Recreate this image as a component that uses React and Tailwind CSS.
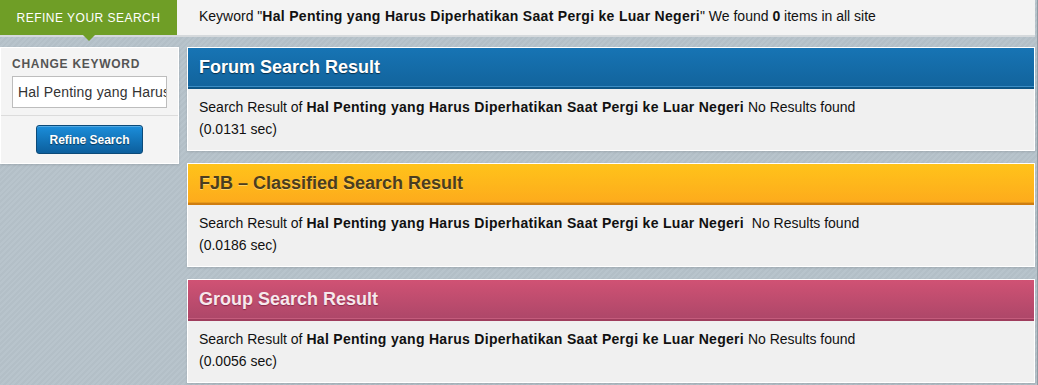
import React from "react";

const KEYWORD = "Hal Penting yang Harus Diperhatikan Saat Pergi ke Luar Negeri";

const SECTIONS = [
  {
    title: "Forum Search Result",
    head: "bg-gradient-to-b from-[#1774b4] to-[#12649d] text-white [text-shadow:0_1px_1px_rgba(0,0,0,0.55)]",
    strip: "bg-[#0d5585] border-t border-[#3a8cc4]",
    time: "0.0131",
    gap: " ",
  },
  {
    title: "FJB \u2013 Classified Search Result",
    head: "bg-gradient-to-b from-[#ffc31a] to-[#fdab1c] text-[#4b3d1f] [text-shadow:0_1px_0_rgba(255,230,150,0.6)]",
    strip: "bg-[#cf7d10] border-t border-[#e79a1a]",
    time: "0.0186",
    gap: "\u00a0 ",
  },
  {
    title: "Group Search Result",
    head: "bg-gradient-to-b from-[#d05274] to-[#ae4769] text-[#f7e8ec] [text-shadow:0_1px_1px_rgba(80,0,30,0.45)]",
    strip: "bg-[#9f3d5d] border-t border-[#c45c7c]",
    time: "0.0056",
    gap: " ",
  },
];

function ResultCard({ s }) {
  return (
    <div className="border border-white bg-[#f0f0f0] shadow-[0_1px_2px_rgba(0,0,0,0.12)]">
      <div className={`h-[38px] flex items-center px-[11px] text-[18px] font-bold ${s.head}`}>
        {s.title}
      </div>
      <div className={`h-[3px] ${s.strip}`} />
      <div className="h-[61px] px-[11px] pt-[7px] text-[14px] leading-[22px] text-[#111]">
        <div className="whitespace-nowrap">
          Search Result of <b className="tracking-[0.3px]">{KEYWORD}</b>{s.gap}No Results found
        </div>
        <div>({s.time} sec)</div>
      </div>
    </div>
  );
}

export default function App() {
  return (
    <div className="min-h-screen w-full font-['Liberation_Sans',Arial,sans-serif] bg-[#b6c2ca] bg-[repeating-linear-gradient(135deg,#b8c4cc_0px,#b8c4cc_2px,#b3bfc7_2px,#b3bfc7_4px)] pr-[2px] border-r border-[#8f9ba3]">
      {/* top bar */}
      <div className="relative flex h-[37px] bg-[#f3f3f3] border-b-2 border-[#d5d9dc]">
        <div className="relative w-[177px] h-[35px] bg-[#6f9e26] flex items-center justify-center text-white text-[12px] tracking-[0.04em]">
          REFINE YOUR SEARCH
          <span className="absolute left-[83px] top-[35px] w-0 h-0 border-l-[6px] border-r-[6px] border-t-[6px] border-l-transparent border-r-transparent border-t-[#6f9e26]" />
        </div>
        <div className="flex items-center pl-[22px] pb-[2px] text-[14px] text-[#111] whitespace-nowrap">
          Keyword "<b className="tracking-[0.3px]">{KEYWORD}</b>" We found&nbsp;<b>0</b>&nbsp;items in all site
        </div>
      </div>

      <div className="flex gap-[8px] pt-[10px]">
        {/* sidebar */}
        <div className="w-[179px] shrink-0 self-start">
          <div className="bg-[#f4f4f4] border border-white shadow-[0_1px_2px_rgba(0,0,0,0.12)]">
            <div className="px-[11px] pt-[9px] pb-[7px]">
              <div className="text-[12px] font-bold text-[#555] tracking-[0.06em] leading-[14px]">CHANGE KEYWORD</div>
              <div className="mt-[5px] h-[32px] w-[155px] bg-white border border-[#bdbdbd] px-[5px] flex items-center overflow-hidden whitespace-nowrap text-[14px] tracking-[0.2px] text-[#333]">
                {KEYWORD}
              </div>
            </div>
            <div className="border-t border-[#dcdcdc] bg-[#f4f4f4] h-[48px] flex justify-center items-start pt-[9px]">
              <button className="w-[107px] h-[29px] rounded-[3px] border border-[#0b4a79] bg-gradient-to-b from-[#1b8edb] to-[#0c5f9d] text-white text-[12px] font-bold [text-shadow:0_1px_1px_rgba(0,0,0,0.5)] shadow-[inset_0_1px_0_rgba(255,255,255,0.25)]">
                Refine Search
              </button>
            </div>
          </div>
        </div>

        {/* results */}
        <div className="flex-1 flex flex-col gap-[12px]">
          {SECTIONS.map((s) => (
            <ResultCard key={s.title} s={s} />
          ))}
        </div>
      </div>
    </div>
  );
}
